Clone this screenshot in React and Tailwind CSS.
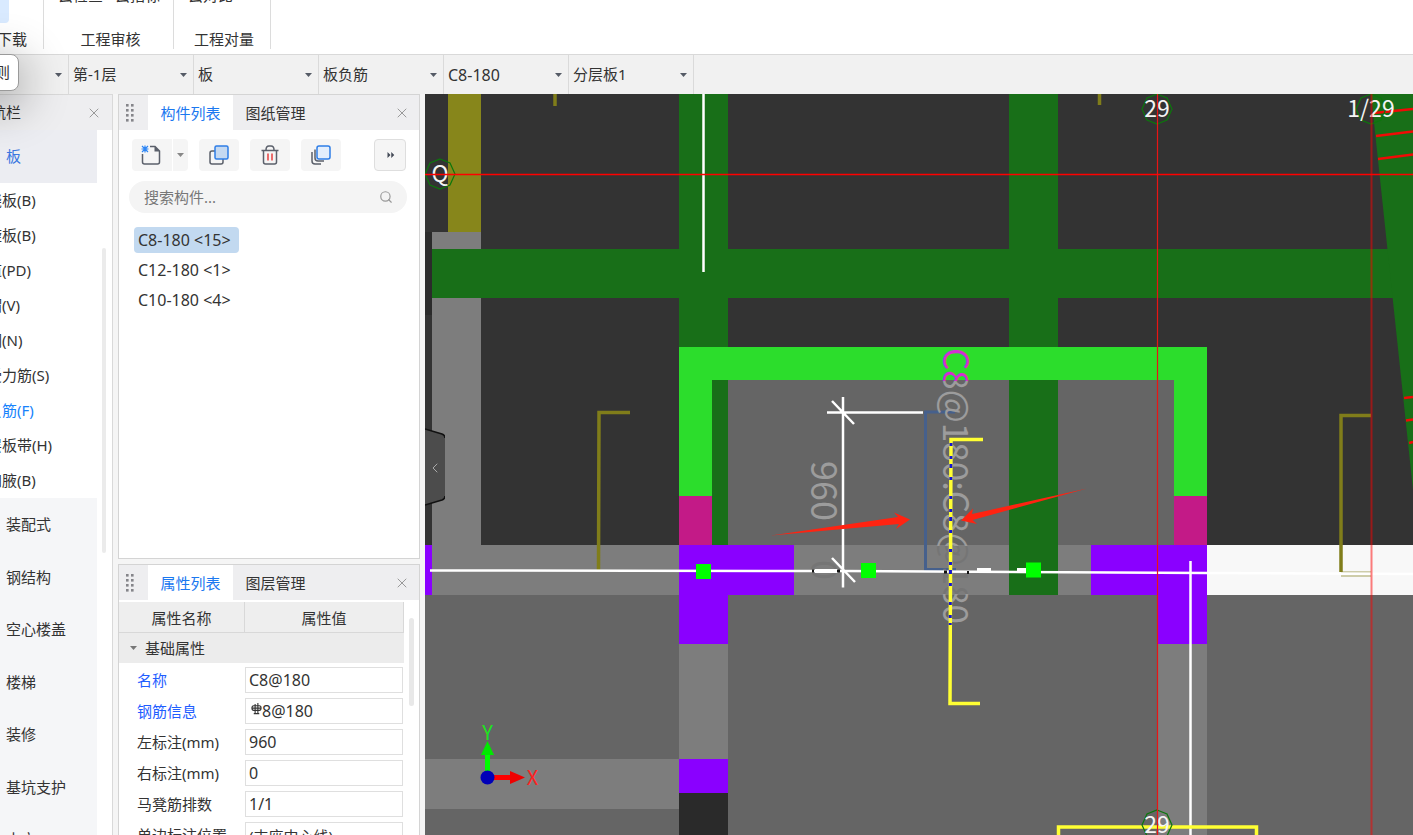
import React, {useState} from "react"
import {X, Search, ChevronLeft} from "lucide-react"

const floorSelects = [
    {name:"工程",options:[""],first:true},
    {name:"楼层",options:["第-1层","首层"]},
    {name:"构件大类",options:["板","梁"]},
    {name:"构件类型",options:["板负筋","板受力筋"]},
    {name:"构件",options:["C8-180","C12-180","C10-180"],latin:true},
    {name:"分层",options:["分层板1","分层板2"]},
]

const slabItems = ["现浇板(B)","螺旋板(B)","坡道(PD)","柱帽(V)","板洞(N)","板受力筋(S)","板负筋(F)","楼层板带(H)","板加腋(B)"]
const categories = ["装配式","钢结构","空心楼盖","楼梯","装修","基坑支护","土方"]
const components = ["C8-180 <15>","C12-180 <1>","C10-180 <4>"]

const properties = [
    {id:"name",label:"名称",value:"C8@180",blue:true},
    {id:"rebar",label:"钢筋信息",value:"8@180",blue:true,grade:true},
    {id:"left",label:"左标注(mm)",value:"960"},
    {id:"right",label:"右标注(mm)",value:"0"},
    {id:"stool",label:"马凳筋排数",value:"1/1"},
    {id:"side",label:"单边标注位置",value:"(支座中心线)",cjk:true},
]

function Caret({className}){
    return <svg className={className} width="7" height="4" viewBox="0 0 7 4" aria-hidden="true">
        <path d="M0 0h7L3.5 4z" fill="currentColor"/>
    </svg>
}

function Ribbon(){
    return <header className="flex h-[54px] shrink-0 overflow-hidden bg-white">
        <div className="flex w-11 flex-col justify-between border-r border-[#dcdcdc] mb-[5px]">
            <button aria-label="规则下载" className="h-[23px] w-[9px] rounded-br bg-[#d9eaff]"/>
            <div className="flex w-[27px] justify-end whitespace-nowrap leading-5">规则下载</div>
        </div>
        <RibbonGroup title="工程审核" actions={["云检查","云指标"]} className="w-[130px]"/>
        <RibbonGroup title="工程对量" actions={["云对比"]} className="w-[97px]"/>
    </header>
}

function RibbonGroup({title,actions,className}){
    return <div className={`flex flex-col justify-between border-r border-[#dcdcdc] mb-[5px] ${className}`}>
        <div className="-mt-[15px] flex gap-3 px-3.5 leading-5">
            {actions.map(action=><button key={action} className="whitespace-nowrap">{action}</button>)}
        </div>
        <div className="pl-1 text-center leading-5">{title}</div>
    </div>
}

function SelectBar(){
    return <div className="relative flex h-10 shrink-0 border-t border-[#d9d9d9] bg-[#f1f1f1]">
        {floorSelects.map(({name,options,first,latin})=>
            <label key={name} className={`relative flex items-center border-r border-[#dadada] ${first?"w-[69px]":"w-[125px]"}`}>
                <select aria-label={name} className={`h-full w-full appearance-none bg-transparent pl-1 pr-5 outline-none ${latin?"text-base":""}`}>
                    {options.map(option=><option key={option}>{option}</option>)}
                </select>
                <Caret className="pointer-events-none absolute right-1.5 text-[#555b66]"/>
            </label>)}
        <div className="absolute -left-8 -top-px z-20 flex h-[37px] w-[51px] items-center justify-end rounded-lg border border-[#9a9a9a] bg-white pr-2 shadow-[0_10px_45px_6px_rgba(0,0,0,0.3)]">规则</div>
    </div>
}

function Navigation(){
    const [active,setActive] = useState("板负筋(F)")

    return <nav className="relative -ml-[30px] w-[143px] shrink-0 overflow-hidden border-r border-t border-[#d9d9d9] bg-white">
        <div className="flex h-[35px] items-center justify-between bg-[#eeeef0] pl-[6px] pr-2.5">
            <span>导航栏</span>
            <button aria-label="关闭导航栏"><X size={16} strokeWidth={1.5} className="text-[#999]"/></button>
        </div>
        <button className="flex h-[53px] w-[127px] items-center bg-[#ecedf2] pl-9 text-[#3a77e0]">板</button>
        <ul>
            {slabItems.map(item=><li key={item}>
                <button onClick={()=>setActive(item)} className={`flex h-[35px] items-center whitespace-nowrap pl-0.5 ${item==active?"text-[#1682fc]":""}`}>{item}</button>
            </li>)}
        </ul>
        <div className="grid h-[368px] w-[127px] auto-rows-fr bg-[#f5f6f8]">
            {categories.map(category=><button key={category} className="flex w-full items-center pl-9">{category}</button>)}
        </div>
        <span className="absolute right-1.5 top-[153px] h-[305px] w-1 rounded-full bg-[#ebebeb]"/>
    </nav>
}

function Grip(){
    return <svg width="8" height="19" viewBox="0 0 8 19" fill="#85858a" aria-hidden="true">
        {[0,5,10,15].map(y=><React.Fragment key={y}>
            <rect x="0" y={y+1} width="2.6" height="2.6"/>
            <rect x="5" y={y+1} width="2.6" height="2.6"/>
        </React.Fragment>)}
    </svg>
}

function PanelHeader({tabs}){
    const [active,setActive] = useState(tabs[0])

    return <div className="flex h-[35px] shrink-0 items-stretch bg-[#eeeef0]">
        <div className="flex w-[29px] items-center pl-[7px]"><Grip/></div>
        {tabs.map(tab=><button key={tab} onClick={()=>setActive(tab)} className={`w-[85px] pt-px ${tab==active?"bg-white text-[#1b78f0]":""}`}>{tab}</button>)}
        <button aria-label="关闭" className="ml-auto pr-[9px]"><X size={16} strokeWidth={1.5} className="text-[#999]"/></button>
    </div>
}

const toolButton = "flex h-8 w-10 items-center justify-center rounded bg-[#f5f5f5]"

function ComponentPanel(){
    const [selected,setSelected] = useState(components[0])

    return <section className="flex h-[465px] shrink-0 flex-col border border-[#d4d4d4] bg-white">
        <PanelHeader tabs={["构件列表","图纸管理"]}/>
        <div className="mt-[9px] flex pl-[13px] pr-[13px]">
            <button aria-label="新建" className="flex h-8 w-10 items-center justify-center rounded-l bg-[#f5f5f5] pr-0.5">
                <svg width="20" height="20" viewBox="0 0 20 20" fill="none">
                    <path d="M9 1.5h5l4.500 4.500V17q0 2-2 2H3.500q-2 0-2-2V9" stroke="#5b606b" strokeWidth="1.500"/>
                    <path d="M13.500 1l5.500 5.500h-5.500z" fill="#5b606b"/>
                    <path d="M1 1l6 6M7 1L1 7M4 .500v7M.500 4h7" stroke="#2e86f5" strokeWidth="1.200"/>
                </svg>
            </button>
            <button aria-label="新建选项" className="ml-px flex h-8 w-[15px] items-center justify-center rounded-r bg-[#f5f5f5] text-[#888]"><Caret/></button>
            <button aria-label="复制" className={`${toolButton} ml-[11px]`}>
                <svg width="20" height="20" viewBox="0 0 20 20" fill="none">
                    <rect x="1" y="6" width="13" height="13" rx="2" stroke="#5b606b" strokeWidth="1.500"/>
                    <rect x="6" y="1" width="13" height="13" rx="1.500" fill="#c5d9f1" stroke="#2e7de6" strokeWidth="1.500"/>
                </svg>
            </button>
            <button aria-label="删除" className={`${toolButton} ml-[11px]`}>
                <svg width="18" height="20" viewBox="0 0 18 20" fill="none">
                    <path d="M.500 5.500h17M2.500 5.500V17q0 2 2 2h9q2 0 2-2V5.500M5 5q0-4 3-4h2q3 0 3 4" stroke="#5b606b" strokeWidth="1.500"/>
                    <path d="M7 8.500v7M11 8.500v7" stroke="#e84040" strokeWidth="1.500"/>
                </svg>
            </button>
            <button aria-label="层间复制" className={`${toolButton} ml-[11px]`}>
                <svg width="20" height="20" viewBox="0 0 20 20" fill="none">
                    <path d="M4 4.500V13q0 3 3 3h6M1 7v9q0 3 3 3h6" stroke="#5b606b" strokeWidth="1.500"/>
                    <rect x="6" y="1" width="13" height="13" rx="2" fill="#e3eefc" stroke="#2e7de6" strokeWidth="1.500"/>
                </svg>
            </button>
            <button aria-label="更多" className="ml-auto flex h-8 w-8 items-center justify-center rounded border border-[#dedede] bg-[#f5f5f5]">
                <svg width="9" height="6" viewBox="0 0 10 8" fill="#444a57"><path d="M1 0l4 4-4 4zM6 0l4 4-4 4z"/></svg>
            </button>
        </div>
        <label className="ml-2.5 mr-3 mt-2.5 flex h-8 items-center rounded-full bg-[#f4f4f4] pl-[15px] pr-3.5">
            <input aria-label="搜索构件" placeholder="搜索构件..." className="min-w-0 flex-1 bg-transparent outline-none placeholder:text-[#777]"/>
            <Search size={14} className="text-[#999]"/>
        </label>
        <ul className="ml-[15px] mt-3.5 flex flex-col items-start gap-1 text-base">
            {components.map(component=><li key={component}>
                <button onClick={()=>setSelected(component)} className={`h-[26px] rounded pl-1 pr-2 leading-6 ${component==selected?"bg-[#c2d9f0]":""}`}>{component}</button>
            </li>)}
        </ul>
    </section>
}

// HRB400 grade mark shown before the bar diameter
function GradeMark(){
    return <svg className="ml-0.5 mb-1 shrink-0" width="11" height="12" viewBox="0 0 12 13" fill="none" stroke="#333" strokeWidth="1.200" aria-hidden="true">
        <path d="M4.500 1v10.500M7.500 0v11.500M3 3h6q2 0 2 2.500T9 8H3Q1 8 1 5.500T3 3zM1 5.500h10M3 11.500h6"/>
    </svg>
}

function PropertyPanel(){
    const [values,setValues] = useState(()=>Object.fromEntries(properties.map(({id,value})=>[id,value])))

    function handleChange(e){
        const {name,value} = e.target
        setValues(oldValues=>({...oldValues,[name]:value}))
    }

    return <section className="relative min-h-0 flex-1 overflow-hidden border border-b-0 border-[#d4d4d4] bg-white">
        <PanelHeader tabs={["属性列表","图层管理"]}/>
        <table className="mt-0.5 w-[285px] table-fixed border-separate border-spacing-0">
            <thead>
                <tr className="h-[31px] bg-[#eeeeee]">
                    <th className="w-[126px] border-b border-r border-[#d8d8d8] p-0 pt-0.5 font-normal">属性名称</th>
                    <th className="border-b border-r border-[#d8d8d8] p-0 pt-0.5 font-normal">属性值</th>
                </tr>
            </thead>
            <tbody>
                <tr className="h-[30px] bg-[#ececec]">
                    <td colSpan={2} className="p-0">
                        <button className="flex items-center gap-2 pl-[11px]"><Caret className="text-[#777]"/>基础属性</button>
                    </td>
                </tr>
                {properties.map(({id,label,blue,grade,cjk})=><tr key={id} className="h-[31px]">
                    <td className="p-0 pl-[18px] pt-[3px]">
                        <label htmlFor={id} className={`whitespace-nowrap ${blue?"text-[#1f5eff]":""}`}>{label}</label>
                    </td>
                    <td className="p-0 pr-px">
                        <div className="mt-[3px] flex h-[26px] items-center border border-[#dfdfdf] bg-white pl-[3px]">
                            {grade&&<GradeMark/>}
                            <input id={id} name={id} value={values[id]} onChange={handleChange} className={`h-full min-w-0 flex-1 outline-none ${cjk?"":"text-base"}`}/>
                        </div>
                    </td>
                </tr>)}
            </tbody>
        </table>
        <span className="absolute right-[5px] top-[53px] h-[88px] w-[5px] rounded-full bg-[#e8e8e8]"/>
    </section>
}

function AxisBubble({x,y,children}){
    return <g>
        <polygon transform={`translate(${x} ${y})`} points="0,-15 10,-11 15,0 10,11 0,15 -10,11 -15,0 -10,-11" fill="none" stroke="#0c770c" strokeWidth="1.2"/>
        <text x={x} y={y+8} textAnchor="middle" fontSize="23" fill="#f4f4f4">{children}</text>
    </g>
}

function Drawing(){
    return <svg className="block h-full w-full" viewBox="425 94 988 741" preserveAspectRatio="xMinYMin slice" fontFamily="'Noto Sans CJK SC', sans-serif">
        <defs>
            <linearGradient id="annotation" gradientUnits="userSpaceOnUse" x1="0" y1="0" x2="300" y2="0">
                <stop offset="0.11" stopColor="#d22fd2"/>
                <stop offset="0.11" stopColor="#9c9c9c"/>
                <stop offset="0.66" stopColor="#9c9c9c"/>
                <stop offset="0.66" stopColor="#757575"/>
                <stop offset="0.82" stopColor="#757575"/>
                <stop offset="0.82" stopColor="#9c9c9c"/>
            </linearGradient>
        </defs>
        <rect x="425" y="94" width="988" height="741" fill="#333"/>
        {/* slabs */}
        <rect x="425" y="595" width="988" height="240" fill="#656565"/>
        <rect x="712" y="380" width="462" height="165" fill="#656565"/>
        {/* walls */}
        <g fill="#7d7d7d">
            <rect x="432" y="232" width="49" height="313"/>
            <rect x="432" y="545" width="775" height="50"/>
            <rect x="679" y="644" width="49" height="115"/>
            <rect x="1157" y="644" width="50" height="191"/>
            <rect x="425" y="759" width="254" height="50"/>
        </g>
        <rect x="425" y="232" width="7" height="83" fill="#2b2b2b"/>
        <rect x="679" y="793" width="49" height="42" fill="#2a2a2a"/>
        <rect x="448" y="94" width="33" height="138" fill="#87861b"/>
        <rect x="1207" y="545" width="206" height="50" fill="#f8f8f8"/>
        {/* beams */}
        <g fill="#186f18">
            <rect x="432" y="249" width="981" height="49"/>
            <rect x="679" y="94" width="49" height="451"/>
            <rect x="1009" y="94" width="49" height="501"/>
            <polygon points="1371,94 1413,94 1413,490"/>
        </g>
        <path d="M679 347h528v149h-33V380H712v116h-33z" fill="#2cdd2c"/>
        <path d="M679 496h33v49h-33zM1174 496h33v49h-33z" fill="#c31a87"/>
        <path d="M425 545h7v50h-7zM679 545h115v50h-66v49h-49zM679 759h49v34h-49zM1091 545h116v99h-50v-49h-66z" fill="#8a00ff"/>
        <path d="M1374 113l39-4M1376 136l37-4.500M1378 159l35-4.500M1404 398l9-1M1406 420.500l7-1M1409 443l4-1" stroke="#f00a06" strokeWidth="2.500"/>
        {/* unselected rebars */}
        <g fill="none" stroke="#807d1a" strokeWidth="3.500">
            <path d="M630 412.500h-31L598.500 570M555 94v12M1099.500 94v11M1371 415.500h-30V572"/>
            <path d="M1341 572h30M1341 576h30M599 571h30" strokeWidth="1" opacity="0.700"/>
        </g>
        <path d="M955 412h-29.500v157.500H956" fill="none" stroke="#46608c" strokeWidth="3"/>
        {/* annotations */}
        <g fontSize="36">
            <text transform="translate(811 461) rotate(90)" fill="#9c9c9c">960</text>
            <text transform="translate(811 560) rotate(90)" fill="#757575">0</text>
            <text transform="translate(943 348) rotate(90)" fontSize="35" fill="url(#annotation)">C8@180:C8@180</text>
        </g>
        {/* white lines */}
        <g fill="none" stroke="#fff" strokeWidth="2.500">
            <path d="M703.500 94v178M1190.500 561v274"/>
            <path d="M430 570.500L843 571l364 2 206 1"/>
            <path d="M815 571h23M977 570h14M1017 570h10" strokeWidth="4"/>
            <path d="M827 412.500h96M843 397v190.500M832 401l22 23M832 558l23 24"/>
        </g>
        <path d="M812 571h2M837 571h3M944 572h3M967 572.500h2" stroke="#111" strokeWidth="3"/>
        {/* selected rebar */}
        <path d="M983 439.500h-32L950 703.500h30" fill="none" stroke="#ffff33" strokeWidth="3.500"/>
        <path d="M951 443L950.200 625" stroke="#1414d0" strokeWidth="3" strokeDasharray="3 10 3 5 4 9 3 16"/>
        <path d="M1058.500 835v-8h198v8" fill="none" stroke="#ffff33" strokeWidth="3.500"/>
        {/* axes */}
        <AxisBubble x={440} y={174}>Q</AxisBubble>
        <AxisBubble x={1157} y={109}>29</AxisBubble>
        <AxisBubble x={1371} y={109}>1/29</AxisBubble>
        <AxisBubble x={1157} y={825}>29</AxisBubble>
        <path d="M425 174.500h988" stroke="#f00" strokeWidth="1.300"/>
        <path d="M1157.500 94v741" stroke="#e81515" strokeWidth="1.200"/>
        <path d="M1371.500 94v741" stroke="#f00" strokeWidth="2" opacity="0.500"/>
        {/* grips */}
        <path d="M696 564h15v15h-15zM861 563h15v15h-15zM1026 562.500h15v15h-15z" fill="#0f0"/>
        {/* markup arrows */}
        <path d="M771 535.500L898 517l-4-4.500 16 7-14 9.500 3-5zM1087 488.500L972 514l1-5.500-12 12 16 3.500-4.500-4z" fill="#ff2311"/>
        {/* coordinate system */}
        <path d="M494 775h16v5h-16z" fill="#f00"/>
        <path d="M510 771l15 6.500-15 6.500z" fill="#e00"/>
        <path d="M485 754h5v18h-5z" fill="#0f0"/>
        <path d="M481 755l6.500-14 6.500 14z" fill="#00e800"/>
        <circle cx="487.500" cy="777.500" r="7" fill="#0000b8"/>
        <text x="487.500" y="740" textAnchor="middle" fontSize="20" fill="#1ee41e">Y</text>
        <text x="532.500" y="785" textAnchor="middle" fontSize="20" fill="#f22">X</text>
    </svg>
}

function Canvas(){
    return <main className="relative ml-[5px] min-w-0 flex-1 overflow-hidden bg-[#333]">
        <Drawing/>
        <button aria-label="收起面板" className="absolute left-0 top-[334px] h-[78px] w-5">
            <svg width="20" height="78" viewBox="0 0 20 78" aria-hidden="true">
                <path d="M0 1l17 5q3 1 3 4v58q0 3-3 4l-17 5z" fill="#4c4c4c"/>
                <path d="M0 1l17 5q3 1 3 4M20 68q0 3-3 4l-17 5" fill="none" stroke="#111" strokeWidth="1.500"/>
            </svg>
            <ChevronLeft size={16} strokeWidth={1.5} className="absolute left-0.5 top-8 text-[#aaa]"/>
        </button>
    </main>
}

export default function App(){
    return <div className="flex h-screen flex-col overflow-hidden bg-[#f5f5f5] font-['Noto_Sans','Noto_Sans_CJK_SC',sans-serif] text-[15px] text-[#333]">
        <Ribbon/>
        <SelectBar/>
        <div className="flex min-h-0 flex-1">
            <Navigation/>
            <div className="ml-[5px] flex w-[302px] shrink-0 flex-col gap-[5px]">
                <ComponentPanel/>
                <PropertyPanel/>
            </div>
            <Canvas/>
        </div>
    </div>
}
